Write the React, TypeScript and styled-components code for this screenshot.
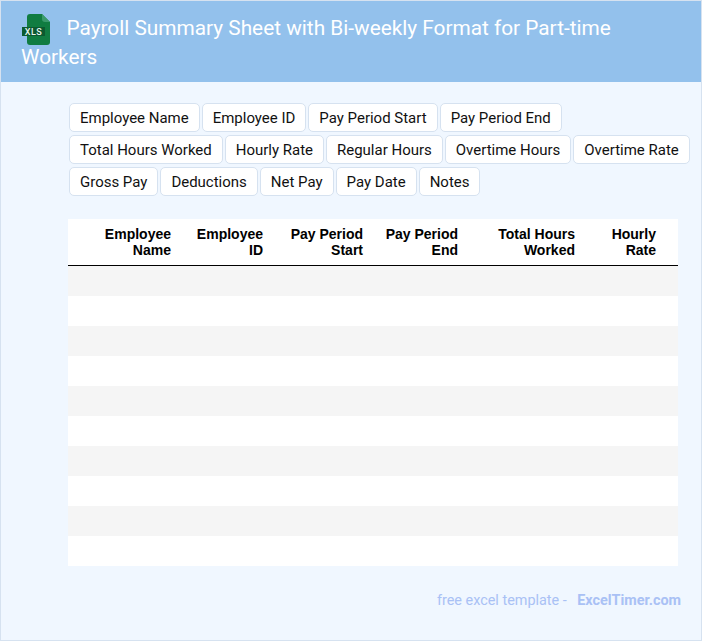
import styled, { createGlobalStyle } from 'styled-components'

const GlobalStyle = createGlobalStyle`
  html, body {
    margin: 0;
    padding: 0;
    background: #f0f7ff;
  }
`

const Card = styled.div`
  width: 702px;
  height: 641px;
  box-sizing: border-box;
  border: 1px solid #d6e2f0;
  background: #f0f7ff;
  font-family: Roboto, sans-serif;
`

const Header = styled.div`
  height: 81px;
  box-sizing: border-box;
  padding: 13px 20px 0;
  background: #93c1ec;
  color: #fff;
  font-size: 20.8px;
  line-height: 29px;
`

const Logo = styled.svg`
  display: inline-block;
  vertical-align: middle;
  width: 32px;
  height: 32px;
  margin: -3px 13.5px -3px 0;
`

const Fields = styled.div`
  margin: 21px 0 0 68px;
  display: flex;
  flex-wrap: wrap;
  gap: 3px 2px;
`

const Field = styled.span`
  box-sizing: border-box;
  height: 29px;
  padding: 0 10px;
  display: flex;
  align-items: center;
  background: #fff;
  border: 1px solid #d6e2f0;
  border-radius: 5px;
  color: #111;
  font-size: 14.99px;
`

const Sheet = styled.table`
  width: 610px;
  margin: 23px 0 0 67px;
  border-collapse: collapse;
  table-layout: fixed;
  background: #fff;
`

const HeadCell = styled.th<{ $width: number }>`
  width: ${props => props.$width}px;
  box-sizing: border-box;
  padding: 7px 22px 7px 0;
  border-bottom: 1px solid #000;
  color: #000;
  font-family: 'Liberation Sans', Arial, sans-serif;
  font-size: 14px;
  font-weight: bold;
  line-height: 16px;
  text-align: right;
  vertical-align: top;
`

const Row = styled.tr`
  height: 30px;
  &:nth-child(odd) {
    background: #f5f5f5;
  }
`

const Footer = styled.div`
  margin: 26px 20px 0 0;
  text-align: right;
  color: #a9c1f5;
  font-size: 14.4px;
  line-height: 17px;
`

const SiteName = styled.b`
  margin-left: 7px;
  font-weight: bold;
`

const columns = [
  { label: 'Employee Name', width: 125 },
  { label: 'Employee ID', width: 92 },
  { label: 'Pay Period Start', width: 100 },
  { label: 'Pay Period End', width: 95 },
  { label: 'Total Hours Worked', width: 117 },
  { label: 'Hourly Rate', width: 81 },
]

const fields = [
  'Employee Name', 'Employee ID', 'Pay Period Start', 'Pay Period End',
  'Total Hours Worked', 'Hourly Rate', 'Regular Hours', 'Overtime Hours', 'Overtime Rate',
  'Gross Pay', 'Deductions', 'Net Pay', 'Pay Date', 'Notes',
]

const XlsLogo = () => (
  <Logo viewBox="0 0 32 32">
    <path d="M6 3a3 3 0 0 1 3-3h12l8 8v20a3 3 0 0 1-3 3H9a3 3 0 0 1-3-3z" fill="#107c41" />
    <path d="M21 0l8 8h-5a3 3 0 0 1-3-3z" fill="#3a9a6b" />
    <rect x="1" y="13" width="23" height="9" fill="#0b5a30" />
    <text x="12.5" y="20.8" textAnchor="middle" fill="#e8f5ee" fontFamily="Roboto, sans-serif" fontSize="9" fontWeight="500" letterSpacing="0.5">XLS</text>
  </Logo>
)

export default function App() {
  return (
    <>
      <GlobalStyle />
      <Card>
        <Header>
          <XlsLogo />
          Payroll Summary Sheet with Bi-weekly Format for Part-time Workers
        </Header>
        <Fields>
          {fields.map(name => <Field key={name}>{name}</Field>)}
        </Fields>
        <Sheet>
          <thead>
            <tr>
              {columns.map(col => <HeadCell key={col.label} $width={col.width}>{col.label}</HeadCell>)}
            </tr>
          </thead>
          <tbody>
            {Array.from({ length: 10 }, (_, i) => (
              <Row key={i}>
                {columns.map(col => <td key={col.label} />)}
              </Row>
            ))}
          </tbody>
        </Sheet>
        <Footer>
          free excel template - <SiteName>ExcelTimer.com</SiteName>
        </Footer>
      </Card>
    </>
  )
}
